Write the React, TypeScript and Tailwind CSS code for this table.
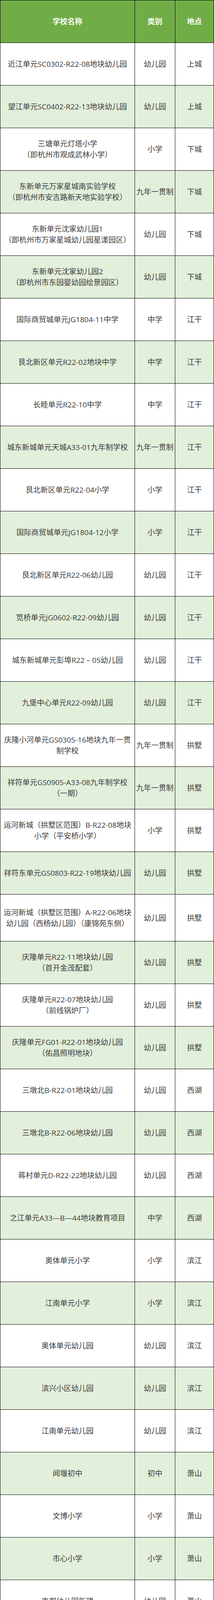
import React from "react";

type Row = { name: string[]; type: string; place: string; tall?: boolean };

const rows: Row[] = [
  { name: ["近江单元SC0302-R22-08地块幼儿园"], type: "幼儿园", place: "上城" },
  { name: ["望江单元SC0402-R22-13地块幼儿园"], type: "幼儿园", place: "上城" },
  { name: ["三塘单元灯塔小学", "（即杭州市观成武林小学）"], type: "小学", place: "下城" },
  { name: ["东新单元万家星城南实验学校", "（即杭州市安吉路新天地实验学校）"], type: "九年一贯制", place: "下城" },
  { name: ["东新单元沈家幼儿园1", "（即杭州市万家星城幼儿园星漾园区）"], type: "幼儿园", place: "下城" },
  { name: ["东新单元沈家幼儿园2", "（即杭州市东园婴幼园绘景园区）"], type: "幼儿园", place: "下城" },
  { name: ["国际商贸城单元JG1804-11中学"], type: "中学", place: "江干" },
  { name: ["艮北新区单元R22-02地块中学"], type: "中学", place: "江干" },
  { name: ["长睦单元R22-10中学"], type: "中学", place: "江干" },
  { name: ["城东新城单元天城A33-01九年制学校"], type: "九年一贯制", place: "江干" },
  { name: ["艮北新区单元R22-04小学"], type: "小学", place: "江干" },
  { name: ["国际商贸城单元JG1804-12小学"], type: "小学", place: "江干" },
  { name: ["艮北新区单元R22-06幼儿园"], type: "幼儿园", place: "江干" },
  { name: ["笕桥单元JG0602-R22-09幼儿园"], type: "幼儿园", place: "江干" },
  { name: ["城东新城单元彭埠R22\u00a0–\u00a005幼儿园"], type: "幼儿园", place: "江干" },
  { name: ["九堡中心单元R22-09幼儿园"], type: "幼儿园", place: "江干" },
  { name: ["庆隆小河单元GS0305-16地块九年一贯", "制学校"], type: "九年一贯制", place: "拱墅" },
  { name: ["祥符单元GS0905-A33-08九年制学校", "（一期）"], type: "九年一贯制", place: "拱墅" },
  { name: ["运河新城（拱墅区范围）B-R22-08地块", "小学（平安桥小学）"], type: "小学", place: "拱墅" },
  { name: ["祥符东单元GS0803-R22-19地块幼儿园"], type: "幼儿园", place: "拱墅" },
  { name: ["运河新城（拱墅区范围）A-R22-06地块", "幼儿园（西杨幼儿园）（康锦苑东侧）"], type: "幼儿园", place: "拱墅", tall: true },
  { name: ["庆隆单元R22-11地块幼儿园", "（首开金茂配套）"], type: "幼儿园", place: "拱墅" },
  { name: ["庆隆单元R22-07地块幼儿园", "（前线锅炉厂）"], type: "幼儿园", place: "拱墅" },
  { name: ["庆隆单元FG01-R22-01地块幼儿园", "（佑昌照明地块）"], type: "幼儿园", place: "拱墅" },
  { name: ["三墩北B-R22-01地块幼儿园"], type: "幼儿园", place: "西湖" },
  { name: ["三墩北B-R22-06地块幼儿园"], type: "幼儿园", place: "西湖" },
  { name: ["蒋村单元D-R22-22地块幼儿园"], type: "幼儿园", place: "西湖" },
  { name: ["之江单元A33—B—44地块教育项目"], type: "中学", place: "西湖" },
  { name: ["奥体单元小学"], type: "小学", place: "滨江" },
  { name: ["江南单元小学"], type: "小学", place: "滨江" },
  { name: ["奥体单元幼儿园"], type: "幼儿园", place: "滨江" },
  { name: ["滨兴小区幼儿园"], type: "幼儿园", place: "滨江" },
  { name: ["江南单元幼儿园"], type: "幼儿园", place: "滨江" },
  { name: ["闻堰初中"], type: "初中", place: "萧山" },
  { name: ["文博小学"], type: "小学", place: "萧山" },
  { name: ["市心小学"], type: "小学", place: "萧山" },
  { name: ["南都幼儿园新建"], type: "幼儿园", place: "萧山" },
  { name: ["信息港幼儿园"], type: "幼儿园", place: "萧山" },
  { name: ["靖江二幼新建"], type: "幼儿园", place: "萧山" },
  { name: ["南阳第三幼儿园新建"], type: "幼儿园", place: "萧山" },
  { name: ["瓜沥七彩幼儿园"], type: "幼儿园", place: "萧山" },
  { name: ["塘栖中学"], type: "高中", place: "余杭" },
  { name: ["城东中学"], type: "初中", place: "余杭" },
  { name: ["运河小学"], type: "小学", place: "余杭" },
  { name: ["小黄山幼儿园"], type: "幼儿园", place: "余杭" },
  { name: ["余杭街道第三幼儿园"], type: "幼儿园", place: "余杭" },
  { name: ["余杭街道第四幼儿园"], type: "幼儿园", place: "余杭" },
  { name: ["良渚申遗南山区块配套幼儿园", "（西溪幼儿园）"], type: "幼儿园", place: "余杭" },
  { name: ["瓶窑镇许家村幼儿园"], type: "幼儿园", place: "余杭" },
  { name: ["星桥十一幼"], type: "幼儿园", place: "余杭" },
  { name: ["谢村幼儿园"], type: "幼儿园", place: "余杭" },
  { name: ["双陈幼儿园"], type: "幼儿园", place: "余杭" },
  { name: ["闲林中心幼儿园万景分园"], type: "幼儿园", place: "余杭" },
  { name: ["富阳中学国际部"], type: "普高", place: "富阳" },
  { name: ["渌渚镇中心幼儿园新浦分园"], type: "幼儿园", place: "富阳" },
  { name: ["场口镇中心幼儿园王洲分园"], type: "幼儿园", place: "富阳" },
  { name: ["城北小学"], type: "小学", place: "临安" },
  { name: ["科技城二小"], type: "小学", place: "临安" },
  { name: ["太湖源镇中心幼儿园"], type: "幼儿园", place: "临安" },
  { name: ["下涯中心幼儿园"], type: "幼儿园", place: "建德" },
  { name: ["碧桂园幼儿园"], type: "幼儿园", place: "建德" },
  { name: ["桐庐县文正小学"], type: "小学", place: "桐庐" },
  { name: ["桐庐县徐凝小学"], type: "小学", place: "桐庐" },
  { name: ["桐庐县富春江幼儿园教育集团"], type: "幼儿园", place: "桐庐" },
  { name: ["桐庐县科技城未来幼儿园"], type: "幼儿园", place: "桐庐" },
  { name: ["千岛湖镇第八小学"], type: "小学", place: "淳安" },
  { name: ["杭州钱塘新区幸福河小学"], type: "小学", place: "钱塘新区" },
  { name: ["杭州钱塘新区江潮幼儿园"], type: "幼儿园", place: "钱塘新区" },
  { name: ["杭州钱塘新区金沙湖幼儿园"], type: "幼儿园", place: "钱塘新区" },
  { name: ["杭州钱塘新区晨晖幼儿园"], type: "幼儿园", place: "钱塘新区" },
];

const cell =
  "flex flex-col items-center justify-center overflow-hidden text-center border-r border-b border-black px-[4px]";

export default function App() {
  return (
    <div
      className="relative w-[547px] bg-white text-[19px] leading-[28px] text-[#3a3a3a]"
      style={{ fontFamily: '"Open Sans", "Noto Sans CJK SC", sans-serif' }}
    >
      <div className="border-l border-t border-black">
        <div className="grid h-[109px] grid-cols-[344px_103px_99px] bg-[#70ad47] font-bold text-white">
          <div className={cell}>学校名称</div>
          <div className={cell}>类别</div>
          <div className={cell}>地点</div>
        </div>
        {rows.map((r, i) => (
          <div
            key={i}
            className={
              (r.tall ? "h-[120px] " : "h-[109px] ") +
              (i % 2 === 1 ? "bg-[#e2efda] " : "bg-white ") +
              "grid grid-cols-[344px_103px_99px]"
            }
          >
            <div className={cell}>
              {r.name.map((l, j) => (
                <span key={j} className="block whitespace-nowrap">
                  {l}
                </span>
              ))}
            </div>
            <div className={cell}>
              <span className="whitespace-nowrap">{r.type}</span>
            </div>
            <div className={cell}>
              <span className="whitespace-nowrap">{r.place}</span>
            </div>
          </div>
        ))}
      </div>
      <div className="pointer-events-none absolute bottom-[14px] right-[24px] flex flex-col items-center leading-none text-white opacity-90">
        <span
          className="text-[26px] font-bold italic tracking-[-1px]"
          style={{ WebkitTextStroke: "1px #bdbdbd" }}
        >
          19楼
        </span>
        <span
          className="mt-[2px] text-[10px] font-bold"
          style={{ WebkitTextStroke: "0.5px #bdbdbd" }}
        >
          19lou.com
        </span>
      </div>
    </div>
  );
}
